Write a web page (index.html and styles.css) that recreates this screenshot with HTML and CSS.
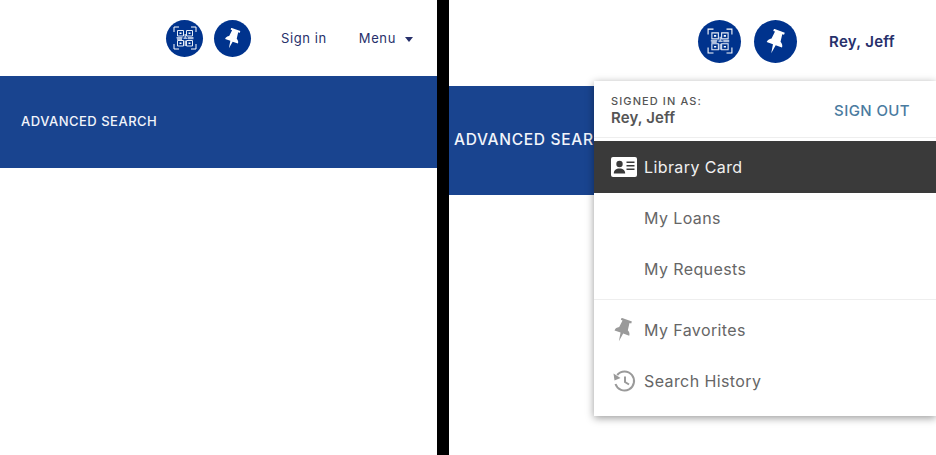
FILE: index.html
```html
<!DOCTYPE html>
<html lang="en">
<head>
<meta charset="utf-8">
<title>Advanced Search</title>
<link rel="stylesheet" href="styles.css">
</head>
<body>
<svg class="defs" width="0" height="0" aria-hidden="true">
  <defs>
    <symbol id="qr" viewBox="0 0 24 24">
      <g fill="none" stroke="#fff" stroke-width="1">
        <path d="M1 6V1h5M18 1h5v5M23 18v5h-5M6 23H1v-5"/>
        <path d="M4.500 4.500h6v5.500h-6zM13.500 4.500h6v5.500h-6zM4.500 14.500h6V20h-6zM13.500 14.500h6V20h-6z" stroke="#e6ecf6"/>
      </g>
      <path d="M6.500 6.500h2V8h-2zM15.500 6.500h2V8h-2zM6.500 16.500h2V18h-2zM15.500 16.500h2V18h-2z" fill="#fff"/>
      <path d="M3.500 11h6v1.500h-6zM10.500 11.500h4V13h-4zM15 11h5.500v2.200H15zM4 12.500h5V14H4zM11.500 8h1.500v3.500h-1.500zM11.500 14.500h1.500V20h-1.500z" fill="#aebfde"/>
    </symbol>
    <symbol id="pin" viewBox="0 0 24 24">
      <g transform="rotate(20 12 12)">
        <path d="M6.500 1h11v2.200h-1.800l.9 7.300c2 1 3.200 2.800 3.200 4.800h-6.400L12 24l-1.400-8.700H4.200c0-2 1.200-3.800 3.200-4.800l.9-7.300H6.500z"/>
      </g>
    </symbol>
  </defs>
</svg>
<main class="screens">
  <section class="screen screen-left">
    <header class="topbar topbar-left">
      <a class="round-btn round-left"><svg class="qr-icon"><use href="#qr"/></svg></a>
      <a class="round-btn round-left"><svg class="pin-icon"><use href="#pin"/></svg></a>
      <a class="nav-link sign-in">Sign in</a>
      <a class="nav-link menu-link">Menu <span class="caret"></span></a>
    </header>
    <div class="banner banner-left"><span>ADVANCED SEARCH</span></div>
  </section>
  <section class="screen screen-right">
    <header class="topbar topbar-right">
      <a class="round-btn round-right"><svg class="qr-icon"><use href="#qr"/></svg></a>
      <a class="round-btn round-right"><svg class="pin-icon"><use href="#pin"/></svg></a>
      <a class="user-name">Rey, Jeff</a>
    </header>
    <div class="banner banner-right"><span>ADVANCED SEARCH</span></div>
    <nav class="dropdown">
      <div class="account">
        <div>
          <div class="signed-label">SIGNED IN AS:</div>
          <div class="signed-name">Rey, Jeff</div>
        </div>
        <a class="sign-out">SIGN OUT</a>
      </div>
      <a class="item item-active">
        <svg class="item-icon" viewBox="0 0 26 20"><path fill="#fff" d="M2 0h22a2 2 0 0 1 2 2v16a2 2 0 0 1-2 2H2a2 2 0 0 1-2-2V2a2 2 0 0 1 2-2z"/><circle cx="8.500" cy="7" r="3.200" fill="#3a3a3a"/><path fill="#3a3a3a" d="M2.800 16.500c0-3.500 2.300-5 5.700-5s5.700 1.500 5.700 5zM15.500 4.500h8v1.500h-8zM15.500 8h8v1.500h-8zM15.500 11.500h8V13h-8z"/></svg>
        <span>Library Card</span>
      </a>
      <a class="item"><span class="item-spacer"></span><span>My Loans</span></a>
      <a class="item"><span class="item-spacer"></span><span>My Requests</span></a>
      <div class="rule"></div>
      <a class="item">
        <svg class="item-icon muted-pin"><use href="#pin"/></svg>
        <span>My Favorites</span>
      </a>
      <a class="item">
        <svg class="item-icon history-icon" viewBox="0 0 24 24" fill="none" stroke="#9a9a9a" stroke-width="2"><path d="M5.200 6A9.500 9.500 0 1 1 3.500 15"/><path d="M13 7.500V13l4 2.500"/><path d="M1.500 4.500l1 7 6-2.500z" fill="#9a9a9a" stroke="none"/></svg>
        <span>Search History</span>
      </a>
    </nav>
  </section>
</main>
</body>
</html>
```
FILE: styles.css
```css
* { box-sizing: border-box; }
html, body { margin: 0; height: 100%; }
body {
  width: 936px;
  height: 455px;
  overflow: hidden;
  background: #fff;
  font-family: Inter, "Open Sans", "Liberation Sans", sans-serif;
}
a { color: inherit; text-decoration: none; }
.defs { position: absolute; }
.screens { display: flex; height: 455px; }
.screen { position: relative; height: 100%; overflow: hidden; background: #fff; }
.screen-left { width: 437px; }
.screen-right { width: 499px; border-left: 12px solid #000; }

.topbar { display: flex; align-items: center; color: #27306b; }
.topbar-left { height: 76px; padding-left: 166px; }
.topbar-right { height: 86px; padding: 0 0 4px 249px; }

.round-btn { display: flex; align-items: center; justify-content: center; border-radius: 50%; background: #00338d; flex: none; }
.round-left { width: 37px; height: 37px; margin-right: 11px; }
.round-right { width: 43px; height: 43px; margin-right: 13px; }
.round-left .qr-icon { width: 24px; height: 24px; }
.round-right .qr-icon { width: 26px; height: 26px; }
.round-left .pin-icon { width: 21px; height: 21px; fill: #fff; }
.round-right .pin-icon { width: 25px; height: 25px; fill: #fff; }

.nav-link { font-size: 13px; letter-spacing: .6px; white-space: nowrap; }
.sign-in { margin-left: 19px; }
.menu-link { margin-left: 32px; display: flex; align-items: center; }
.caret { display: inline-block; margin-left: 9px; margin-top: 3px; border: 4px solid transparent; border-top: 5px solid #27306b; border-bottom: 0; }

.user-name { margin-left: 19px; font-size: 15px; font-weight: 600; letter-spacing: .3px; white-space: nowrap; }

.banner { background: #19448f; color: #f2f5fb; display: flex; align-items: center; white-space: nowrap; font-weight: 500; }
.banner-left { height: 92px; padding: 0 0 2px 21px; font-size: 13px; letter-spacing: .5px; }
.banner-right { height: 109px; padding: 0 0 2px 5px; font-size: 15.500px; letter-spacing: .7px; }

.dropdown {
  position: absolute;
  left: 145px;
  top: 81px;
  width: 342px;
  height: 335px;
  background: #fff;
  box-shadow: 0 2px 8px rgba(0,0,0,.4);
  color: #666;
  font-size: 16px;
}
.account {
  height: 57px;
  padding: 14px 26px 0 17px;
  display: flex;
  justify-content: space-between;
  border-bottom: 1px solid #eee;
}
.signed-label { font-size: 11px; letter-spacing: 1.1px; color: #555; line-height: 13px; font-weight: 500; }
.signed-name { font-size: 15px; font-weight: 600; color: #555; line-height: 19px; letter-spacing: .1px; }
.sign-out { font-size: 15px; font-weight: 500; color: #4a7ba0; letter-spacing: .4px; line-height: 32px; }
.item { display: flex; align-items: center; height: 51px; padding: 0 0 2px 17px; letter-spacing: .4px; }
.item-icon, .item-spacer { width: 26px; height: 20px; margin-right: 7px; flex: none; }
.item-active { margin-top: 3px; height: 52px; padding-bottom: 0; background: #3a3a3a; color: #f0f0f0; }
.muted-pin { width: 24px; height: 24px; fill: #9a9a9a; margin-right: 9px; }
.history-icon { width: 24px; height: 24px; margin-left: 1px; margin-right: 8px; }
.rule { height: 1px; margin-top: 4px; margin-bottom: 5px; background: #eee; }
```
